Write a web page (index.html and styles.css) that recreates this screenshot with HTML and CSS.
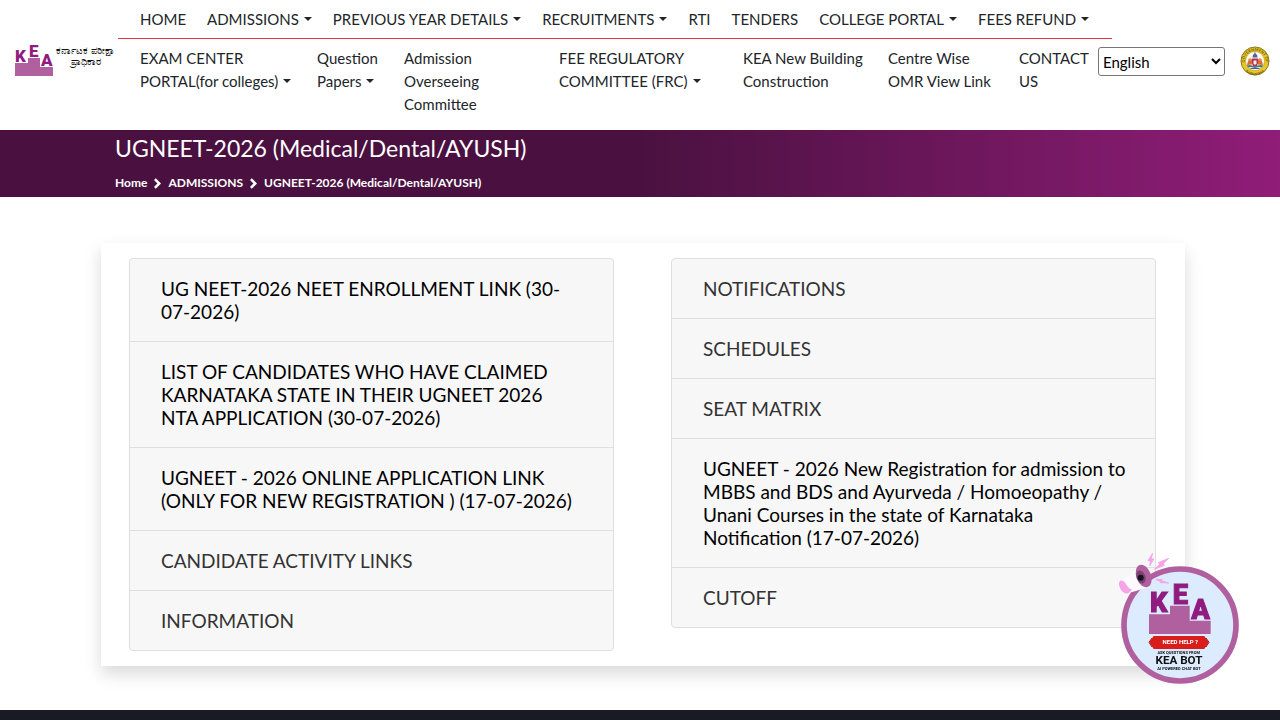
FILE: index.html
```html
<!DOCTYPE html>
<html lang="en">
<head>
  <meta charset="UTF-8" />
  <meta name="viewport" content="width=device-width, initial-scale=1" />
  <title>UGNEET-2026 (Medical/Dental/AYUSH)</title>
  <link rel="stylesheet" href="styles.css">
</head>
<body>
  <header class="header">
    <a class="logo" href="#" aria-label="KEA">
      <svg class="logo-mark" viewBox="0 0 40 34" aria-hidden="true">
        <path class="steps" d="M1 20h13v-5h12v9h13v9H1z"/>
        <text class="kea" x="1" y="19" font-size="17">K</text>
        <text class="kea" x="15" y="14" font-size="17">E</text>
        <text class="kea" x="27" y="23" font-size="17">A</text>
      </svg>
      <span class="logo-text">ಕರ್ನಾಟಕ ಪರೀಕ್ಷಾ<br>ಪ್ರಾಧಿಕಾರ</span>
    </a>
    <nav class="nav">
      <ul class="nav-top">
        <li><a href="#">HOME</a></li>
        <li><a class="drop" href="#">ADMISSIONS</a></li>
        <li><a class="drop" href="#">PREVIOUS YEAR DETAILS</a></li>
        <li><a class="drop" href="#">RECRUITMENTS</a></li>
        <li><a href="#">RTI</a></li>
        <li><a href="#">TENDERS</a></li>
        <li><a class="drop" href="#">COLLEGE PORTAL</a></li>
        <li><a class="drop" href="#">FEES REFUND</a></li>
      </ul>
      <ul class="nav-bottom">
        <li><a class="drop" href="#">EXAM CENTER<br>PORTAL(for colleges)</a></li>
        <li><a class="drop" href="#">Question<br>Papers</a></li>
        <li><a href="#">Admission<br>Overseeing<br>Committee</a></li>
        <li><a class="drop" href="#">FEE REGULATORY<br>COMMITTEE (FRC)</a></li>
        <li><a href="#">KEA New Building<br>Construction</a></li>
        <li><a href="#">Centre Wise<br>OMR View Link</a></li>
        <li><a href="#">CONTACT<br>US</a></li>
      </ul>
    </nav>
    <select class="lang" aria-label="Language">
      <option>English</option>
      <option>ಕನ್ನಡ</option>
    </select>
    <svg class="emblem" viewBox="0 0 60 60" role="img" aria-label="Government of Karnataka">
      <defs>
        <path id="arcTop" d="M9 31a21 21 0 0 1 42 0"/>
        <path id="arcBottom" d="M5 34a25 25 0 0 0 50 0"/>
      </defs>
      <circle cx="30" cy="30" r="28" fill="#e9c620" stroke="#8d7727" stroke-width="2"/>
      <circle cx="30" cy="30" r="19" fill="#fdfaf0" stroke="#a88b25"/>
      <text class="seal" font-size="8"><textPath href="#arcTop" startOffset="50%">GOVERNMENT OF</textPath></text>
      <text class="seal" font-size="7"><textPath href="#arcBottom" startOffset="50%">KARNATAKA</textPath></text>
      <path d="M14 38q3-14 7-13 5 1 4 12zM46 38q-3-14-7-13-5 1-4 12z" fill="#d9683a"/>
      <path d="M15 28l5-4 3 6zM45 28l-5-4-3 6z" fill="#dd9a52"/>
      <path d="M24 25h12v9q-1 6-6 8-5-2-6-8z" fill="#b8304a"/>
      <path d="M27 29h6v6l-3 3-3-3z" fill="#eef0f4"/>
      <path d="M25 23l1-6h8l1 6zM28 17l2-6 2 6z" fill="#51619b"/>
      <path d="M13 39q8-3 17 2 9-5 17-2l-4 4q-7-2-13 1-6-3-13-1z" fill="#3f7d78"/>
      <path d="M21 44q9-2 18 0v2H21z" fill="#4b5c99"/>
    </svg>
  </header>

  <section class="banner">
    <h1>UGNEET-2026 (Medical/Dental/AYUSH)</h1>
    <div class="crumbs">
      <a href="#">Home</a>
      <svg viewBox="0 0 8 12" aria-hidden="true"><path d="M1 1l5 5-5 5"/></svg>
      <a href="#">ADMISSIONS</a>
      <svg viewBox="0 0 8 12" aria-hidden="true"><path d="M1 1l5 5-5 5"/></svg>
      <a href="#">UGNEET-2026 (Medical/Dental/AYUSH)</a>
    </div>
  </section>

  <main class="card">
    <ul class="list">
      <li><a class="open" href="#">UG NEET-2026 NEET ENROLLMENT LINK (30-07-2026)</a></li>
      <li><a class="open" href="#">LIST OF CANDIDATES WHO HAVE CLAIMED KARNATAKA STATE IN THEIR UGNEET 2026<br>NTA APPLICATION (30-07-2026)</a></li>
      <li><a class="open" href="#">UGNEET - 2026 ONLINE APPLICATION LINK (ONLY FOR NEW REGISTRATION ) (17-07-2026)</a></li>
      <li><a href="#">CANDIDATE ACTIVITY LINKS</a></li>
      <li><a href="#">INFORMATION</a></li>
    </ul>
    <ul class="list">
      <li><a href="#">NOTIFICATIONS</a></li>
      <li><a href="#">SCHEDULES</a></li>
      <li><a href="#">SEAT MATRIX</a></li>
      <li><a class="open" href="#">UGNEET - 2026 New Registration for admission to MBBS and BDS and Ayurveda / Homoeopathy / Unani Courses in the state of Karnataka Notification (17-07-2026)</a></li>
      <li><a href="#">CUTOFF</a></li>
    </ul>
  </main>

  <footer class="footer"></footer>

  <button class="bot" type="button" aria-label="KEA BOT">
    <svg viewBox="0 0 366 396" aria-hidden="true">
      <circle cx="186" cy="216" r="168" fill="#dcebfe" stroke="#b0609f" stroke-width="17"/>
      <path class="steps" d="M93 184h63v-26h59v45h63v40H93z"/>
      <g class="bot-kea">
        <text class="kea" x="96" y="178" font-size="82">K</text>
        <text class="kea" x="164" y="153" font-size="82">E</text>
        <text class="kea" x="220" y="199" font-size="82">A</text>
      </g>
      <path d="M107 249h152l13 19-13 20H107l-13-20z" fill="#d81d1b"/>
      <path d="M102 255l-9 13 9 14M264 255l9 13-9 14" fill="none" stroke="#b01314" stroke-width="3"/>
      <text class="bot-text white" x="187" y="274" font-size="18">NEED HELP ?</text>
      <text class="bot-text" x="182" y="304" font-size="12">ASK QUESTIONS FROM</text>
      <text class="bot-text" x="183" y="334" font-size="35">KEA BOT</text>
      <text class="bot-text" x="183" y="350" font-size="12">AI POWERED CHAT BOT</text>
      <path d="M18 80l42-34 36 56-56 16z" fill="#fdf9ff"/>
      <path d="M8 82q-10 8-1 25 8 16 24 14l11-11q-11-3-16-13-5-12-18-15z" fill="#f3a5e7"/>
      <ellipse cx="77" cy="69" rx="22" ry="35" transform="rotate(-20 77 69)" fill="#b0609f"/>
      <ellipse cx="69" cy="72" rx="13" ry="20" transform="rotate(-20 69 72)" fill="#784371"/>
      <circle cx="68" cy="74" r="9" fill="#15131c"/>
      <path d="M104 1L90 23l8 1-3 15 12-21-8-1zM152 16l-31 13 5 4-17 16 30-12-4-5zM114 80l18-1-1 5 21 6-25-1v-4z" fill="#f3a5e7" stroke="#f3a5e7" stroke-width="3"/>
    </svg>
  </button>
</body>
</html>
```

FILE: styles.css
```css
* { box-sizing: border-box; }
body {
  margin: 0;
  font-family: Lato, "Noto Sans", sans-serif;
  font-size: 15px;
  line-height: 23px;
  color: #212529;
  background: #fff;
}
a { color: inherit; text-decoration: none; }
ul { list-style: none; margin: 0; padding: 0; }

.header {
  display: flex;
  align-items: flex-start;
  padding: 0 10px 14px 14px;
}
.logo {
  display: flex;
  flex: none;
  width: 104px;
  margin-top: 43px;
  gap: 2px;
}
.logo-mark { width: 40px; height: 34px; flex: none; overflow: visible; }
.logo-text {
  font-size: 10px;
  line-height: 11px;
  font-weight: 500;
  text-align: center;
  white-space: nowrap;
  padding-top: 2px;
  color: #111;
}
.steps { fill: #b0609f; }
.kea {
  font-family: Roboto, sans-serif;
  font-weight: 900;
  fill: #901c80;
}
.nav { flex: 1; }
.nav-top {
  display: flex;
  gap: 21px;
  padding: 8px 0 7px 22px;
  border-bottom: 1px solid #dc3545;
  white-space: nowrap;
}
.nav-bottom {
  display: grid;
  grid-template-columns: 177fr 87fr 155fr 184fr 145fr 131fr 93fr;
  padding: 8px 0 0 22px;
  white-space: nowrap;
}
.drop::after {
  content: "";
  display: inline-block;
  margin-left: 5px;
  vertical-align: 4px;
  border-top: 4px solid;
  border-left: 4px solid transparent;
  border-right: 4px solid transparent;
}
.lang {
  flex: none;
  width: 127px;
  height: 29px;
  margin: 47px 15px 0 -14px;
  padding: 0;
  font-family: Lato, sans-serif;
  font-size: 15px;
  color: #000;
  background: #fff;
  border: 1px solid #767676;
  border-radius: 3px;
}
.emblem { flex: none; width: 30px; height: 30px; margin-top: 46px; }
.seal {
  font-family: Lato, sans-serif;
  font-weight: bold;
  text-anchor: middle;
  fill: #6c5a16;
}

.banner {
  padding: 5px 115px 4px;
  color: #fff;
  background: linear-gradient(to right, #4a1140 0%, #4a1140 50%, #901d78 100%);
}
.banner h1 {
  margin: 0;
  font-size: 23px;
  line-height: 26px;
  font-weight: normal;
}
.crumbs {
  display: flex;
  align-items: center;
  gap: 7px;
  margin-top: 12px;
  font-size: 12px;
  line-height: 20px;
  font-weight: bold;
}
.crumbs svg {
  width: 7px;
  height: 11px;
  fill: none;
  stroke: #fff;
  stroke-width: 3;
}

.card {
  display: grid;
  grid-template-columns: 1fr 1fr;
  align-items: start;
  gap: 57px;
  margin: 46px 95px 44px 101px;
  padding: 15px 29px 15px 28px;
  background: #fff;
  box-shadow: 0 8px 16px rgba(0, 0, 0, 0.15);
}
.list {
  border: 1px solid #dfdfdf;
  border-radius: 4px;
  background: #f7f7f7;
  font-size: 19px;
  color: #333;
}
.list li + li { border-top: 1px solid #dfdfdf; }
.list a { display: block; padding: 18px 28px 18px 31px; }
.list .open { color: #000; }

.footer { height: 10px; background: #1a1a24; }

.bot {
  position: fixed;
  right: 40px;
  bottom: 35px;
  width: 122px;
  height: 132px;
  padding: 0;
  border: 0;
  background: none;
  cursor: pointer;
}
.bot svg { display: block; width: 100%; height: 100%; }
.bot-kea { stroke: #901c80; stroke-width: 3; }
.bot-text {
  font-family: Roboto, sans-serif;
  font-weight: bold;
  text-anchor: middle;
  fill: #111;
}
.white { fill: #fff; }
```
